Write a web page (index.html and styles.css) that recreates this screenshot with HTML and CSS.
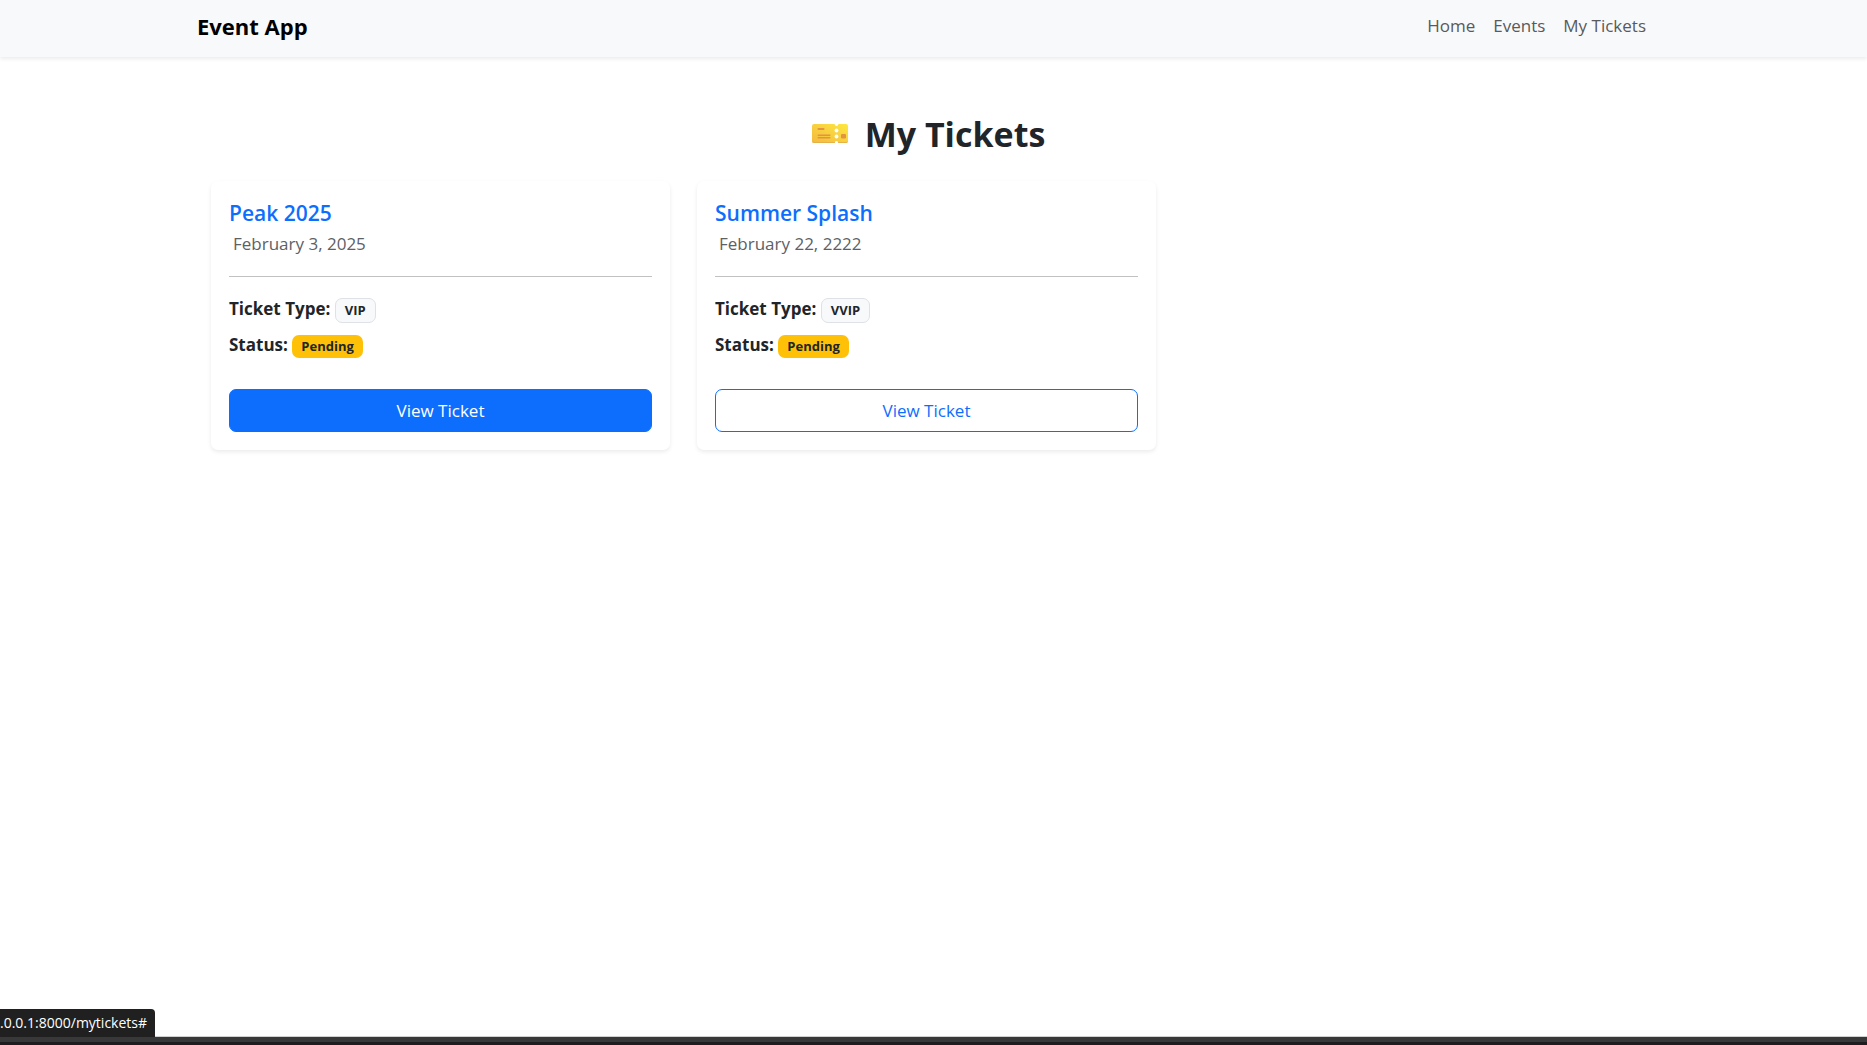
FILE: index.html
```html
<!DOCTYPE html>
<html lang="en">
<head>
<meta charset="utf-8">
<meta name="viewport" content="width=device-width, initial-scale=1">
<title>My Tickets</title>
<link rel="stylesheet" href="styles.css">
</head>
<body>
<header class="site-header">
  <nav class="container navbar">
    <a class="brand" href="#">Event App</a>
    <ul class="nav-links">
      <li><a href="#">Home</a></li>
      <li><a href="#">Events</a></li>
      <li><a href="#">My Tickets</a></li>
    </ul>
  </nav>
</header>
<main class="main">
  <div class="container">
    <h1 class="page-title">
      <svg class="ticket-icon" viewBox="0 0 36 20" aria-hidden="true">
        <defs>
          <linearGradient id="gold" x1="0" y1="1" x2="1" y2="0">
            <stop offset="0" stop-color="#f3b93f"/>
            <stop offset="1" stop-color="#fee83f"/>
          </linearGradient>
        </defs>
        <path fill="url(#gold)" d="M2 0H22.500Q23 2 24.500 2T26.500 0H34Q36 0 36 2V17Q36 19 34 19H26.500Q26 17 24.500 17T22.500 19H2Q0 19 0 17V2Q0 0 2 0Z"/>
        <path fill="#e6b04a" d="M0 17Q0 19 2 19H22.500L23 18H2Q1 18 0 17ZM26.500 19H34Q36 19 36 17Q35 18 34 18H26Z"/>
        <g fill="#fff"><circle cx="24.500" cy="6.500" r="1.900"/><circle cx="24.500" cy="12.500" r="1.900"/></g>
        <g fill="#e2943f"><rect x="5.500" y="4" width="7" height="2" rx="1"/><rect x="5.500" y="10.500" width="13" height="1.500" rx=".7"/><rect x="5.500" y="13" width="13" height="1.500" rx=".7"/><rect x="29" y="10" width="5" height="4.500" rx="1"/></g>
      </svg>
      My Tickets
    </h1>
    <div class="ticket-grid">
      <article class="card">
        <h2 class="card-title">Peak 2025</h2>
        <p class="card-date">February 3, 2025</p>
        <hr class="divider">
        <p class="detail"><strong>Ticket Type:</strong> <span class="badge badge-light">VIP</span></p>
        <p class="detail"><strong>Status:</strong> <span class="badge badge-warning">Pending</span></p>
        <a class="btn btn-primary" href="#">View Ticket</a>
      </article>
      <article class="card">
        <h2 class="card-title">Summer Splash</h2>
        <p class="card-date">February 22, 2222</p>
        <hr class="divider">
        <p class="detail"><strong>Ticket Type:</strong> <span class="badge badge-light">VVIP</span></p>
        <p class="detail"><strong>Status:</strong> <span class="badge badge-warning">Pending</span></p>
        <a class="btn btn-outline" href="#">View Ticket</a>
      </article>
    </div>
  </div>
</main>
<footer class="bottom-edge">
  <div class="link-status">.0.0.1:8000/mytickets#</div>
</footer>
</body>
</html>
```
FILE: styles.css
```css
* { box-sizing: border-box; }

body {
  display: flex;
  flex-direction: column;
  min-height: 100vh;
  margin: 0;
  background: #fff;
  color: #212529;
  font-family: "Segoe UI", "Open Sans", "Noto Sans", sans-serif;
  font-size: 17px;
  line-height: 26px;
}

a { text-decoration: none; }

.container {
  width: 100%;
  max-width: 1459px;
  margin: 0 auto;
}

.site-header {
  padding: 0 14px 0 0;
  background: #f8f9fb;
  box-shadow: 0 2px 4px rgba(0, 0, 0, 0.08);
}

.navbar {
  display: flex;
  align-items: center;
  justify-content: space-between;
  height: 57px;
  padding: 0 10px 5px 0;
}

.brand {
  color: #000;
  font-size: 22px;
  font-weight: 700;
}

.nav-links {
  display: flex;
  gap: 18px;
  margin: 0;
  padding: 0;
  list-style: none;
}

.nav-links a { color: #595a5b; }

.main {
  flex: 1;
  padding: 53px 14px 53px 0;
}

.page-title {
  display: flex;
  align-items: center;
  justify-content: center;
  gap: 17px;
  margin: 0 0 23px;
  padding-left: 4px;
  font-size: 34px;
  font-weight: 700;
  line-height: 48px;
}

.ticket-icon {
  width: 36px;
  height: 20px;
}

.ticket-grid {
  display: grid;
  grid-template-columns: repeat(auto-fill, minmax(400px, 1fr));
  gap: 27px;
  padding: 0 14px;
}

.card {
  display: flex;
  flex-direction: column;
  padding: 18px;
  border-radius: 7px;
  background: #fff;
  box-shadow: 0 2px 4px rgba(0, 0, 0, 0.08);
}

.card-title {
  margin: 0 0 4px;
  color: #0d6efd;
  font-size: 21px;
  font-weight: 600;
  line-height: 28px;
}

.card-date {
  margin: 0 0 19px;
  padding-left: 4px;
  color: #5c6166;
}

.divider {
  width: 100%;
  height: 1px;
  margin: 0 0 19px;
  border: 0;
  background: #c0c1c2;
}

.detail { margin: 0 0 9px; }

.badge {
  display: inline-block;
  padding: 5px 9px;
  border-radius: 7px;
  font-size: 13px;
  font-weight: 700;
  line-height: 13px;
}

.badge-light {
  border: 1px solid #dee2e6;
  background: #f8f9fb;
}

.badge-warning { background: #ffc107; }

.btn {
  margin-top: 22px;
  padding: 8px 12px;
  border: 1px solid #0d6efd;
  border-radius: 7px;
  line-height: 25px;
  text-align: center;
}

.btn-primary {
  background: #0d6efd;
  color: #fff;
}

.btn-outline { color: #0d6efd; }

.bottom-edge {
  position: relative;
  height: 9px;
  border-top: 1px solid #d0d0d0;
  border-bottom: 3px solid #1f1b1e;
  background: #383838;
}

.link-status {
  position: absolute;
  bottom: 100%;
  left: 0;
  padding: 0 8px 1px 0;
  border-top-right-radius: 4px;
  background: #202020;
  color: #fff;
  font-size: 14px;
  line-height: 27px;
}
```
